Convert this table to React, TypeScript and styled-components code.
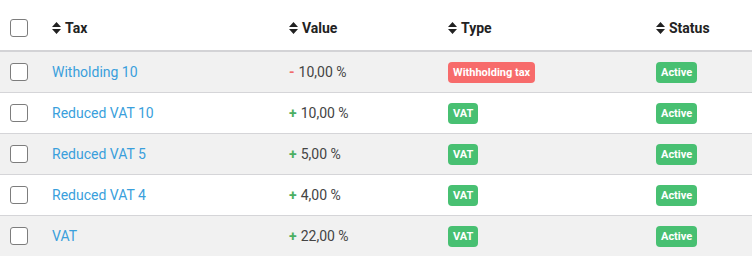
import React from 'react';
import styled, { createGlobalStyle } from 'styled-components';

const GlobalStyle = createGlobalStyle`
  body {
    margin: 0;
    background: #fff;
    font-family: Roboto, "Liberation Sans", sans-serif;
  }
`;

const Table = styled.table`
  width: 752px;
  border-collapse: separate;
  border-spacing: 0;
  table-layout: fixed;
  font-size: 14px;
  color: #363636;
`;

const HeadCell = styled.th<{ $w: number }>`
  width: ${p => p.$w}px;
  height: 42px;
  padding: 7px 12px 1px 12px;
  text-align: left;
  font-weight: 700;
  font-size: 14px;
  color: #222;
  border-bottom: 2px solid #d3d3d6;
  box-sizing: content-box;
  vertical-align: middle;
`;

const Row = styled.tr<{ $striped: boolean; $last: boolean }>`
  background: ${p => (p.$striped ? '#f1f1f1' : '#fff')};
  & > td {
    border-bottom: ${p => (p.$last ? '0' : '1px solid #d5d5d8')};
  }
`;

const Cell = styled.td`
  height: 40px;
  padding: 0 12px;
  box-sizing: content-box;
  vertical-align: middle;
  color: #444;
`;

const CheckCell = styled(Cell)`
  padding: 0 10px;
`;

const Check = styled.span`
  display: block;
  width: 18px;
  height: 18px;
  box-sizing: border-box;
  border: 1px solid #7d7d7d;
  border-radius: 3px;
  background: #fff;
`;

const HeadLabel = styled.span`
  display: inline-flex;
  align-items: center;
  gap: 4px;
`;

const Link = styled.a`
  color: #3a9fdc;
  text-decoration: none;
`;

const Sign = styled.span<{ $neg: boolean }>`
  color: ${p => (p.$neg ? '#f06b6b' : '#4caf62')};
  font-weight: 700;
  margin-right: 4px;
`;

const Tag = styled.span<{ $kind: 'danger' | 'success' }>`
  display: inline-flex;
  align-items: center;
  height: 21px;
  padding: 0 5px;
  border-radius: 4px;
  font-size: 11px;
  font-weight: 700;
  color: #fff;
  background: ${p => (p.$kind === 'danger' ? '#f76b6b' : '#48c072')};
`;

const SortIcon = () => (
  <svg width="9" height="12" viewBox="0 0 9 12">
    <path d="M4.5 0 L9 5 H0 Z M0 7 H9 L4.5 12 Z" fill="#222" />
  </svg>
);

const taxes = [
  { name: 'Witholding 10', value: '10,00 %', neg: true, type: 'Withholding tax' },
  { name: 'Reduced VAT 10', value: '10,00 %', neg: false, type: 'VAT' },
  { name: 'Reduced VAT 5', value: '5,00 %', neg: false, type: 'VAT' },
  { name: 'Reduced VAT 4', value: '4,00 %', neg: false, type: 'VAT' },
  { name: 'VAT', value: '22,00 %', neg: false, type: 'VAT' },
];

const columns = [
  { label: 'Tax', w: 213 },
  { label: 'Value', w: 135 },
  { label: 'Type', w: 184 },
  { label: 'Status', w: 84 },
];

const App: React.FC = () => (
  <>
    <GlobalStyle />
    <Table>
      <thead>
        <tr>
          <HeadCell $w={20} style={{ paddingLeft: 10, paddingRight: 10 }}>
            <Check />
          </HeadCell>
          {columns.map(c => (
            <HeadCell key={c.label} $w={c.w}>
              <HeadLabel>
                <SortIcon />
                {c.label}
              </HeadLabel>
            </HeadCell>
          ))}
        </tr>
      </thead>
      <tbody>
        {taxes.map((t, i) => (
          <Row key={t.name} $striped={i % 2 === 0} $last={i === taxes.length - 1}>
            <CheckCell>
              <Check />
            </CheckCell>
            <Cell>
              <Link href="#">{t.name}</Link>
            </Cell>
            <Cell>
              <Sign $neg={t.neg}>{t.neg ? '-' : '+'}</Sign>
              {t.value}
            </Cell>
            <Cell>
              <Tag $kind={t.neg ? 'danger' : 'success'}>{t.type}</Tag>
            </Cell>
            <Cell>
              <Tag $kind="success">Active</Tag>
            </Cell>
          </Row>
        ))}
      </tbody>
    </Table>
  </>
);

export default App;
